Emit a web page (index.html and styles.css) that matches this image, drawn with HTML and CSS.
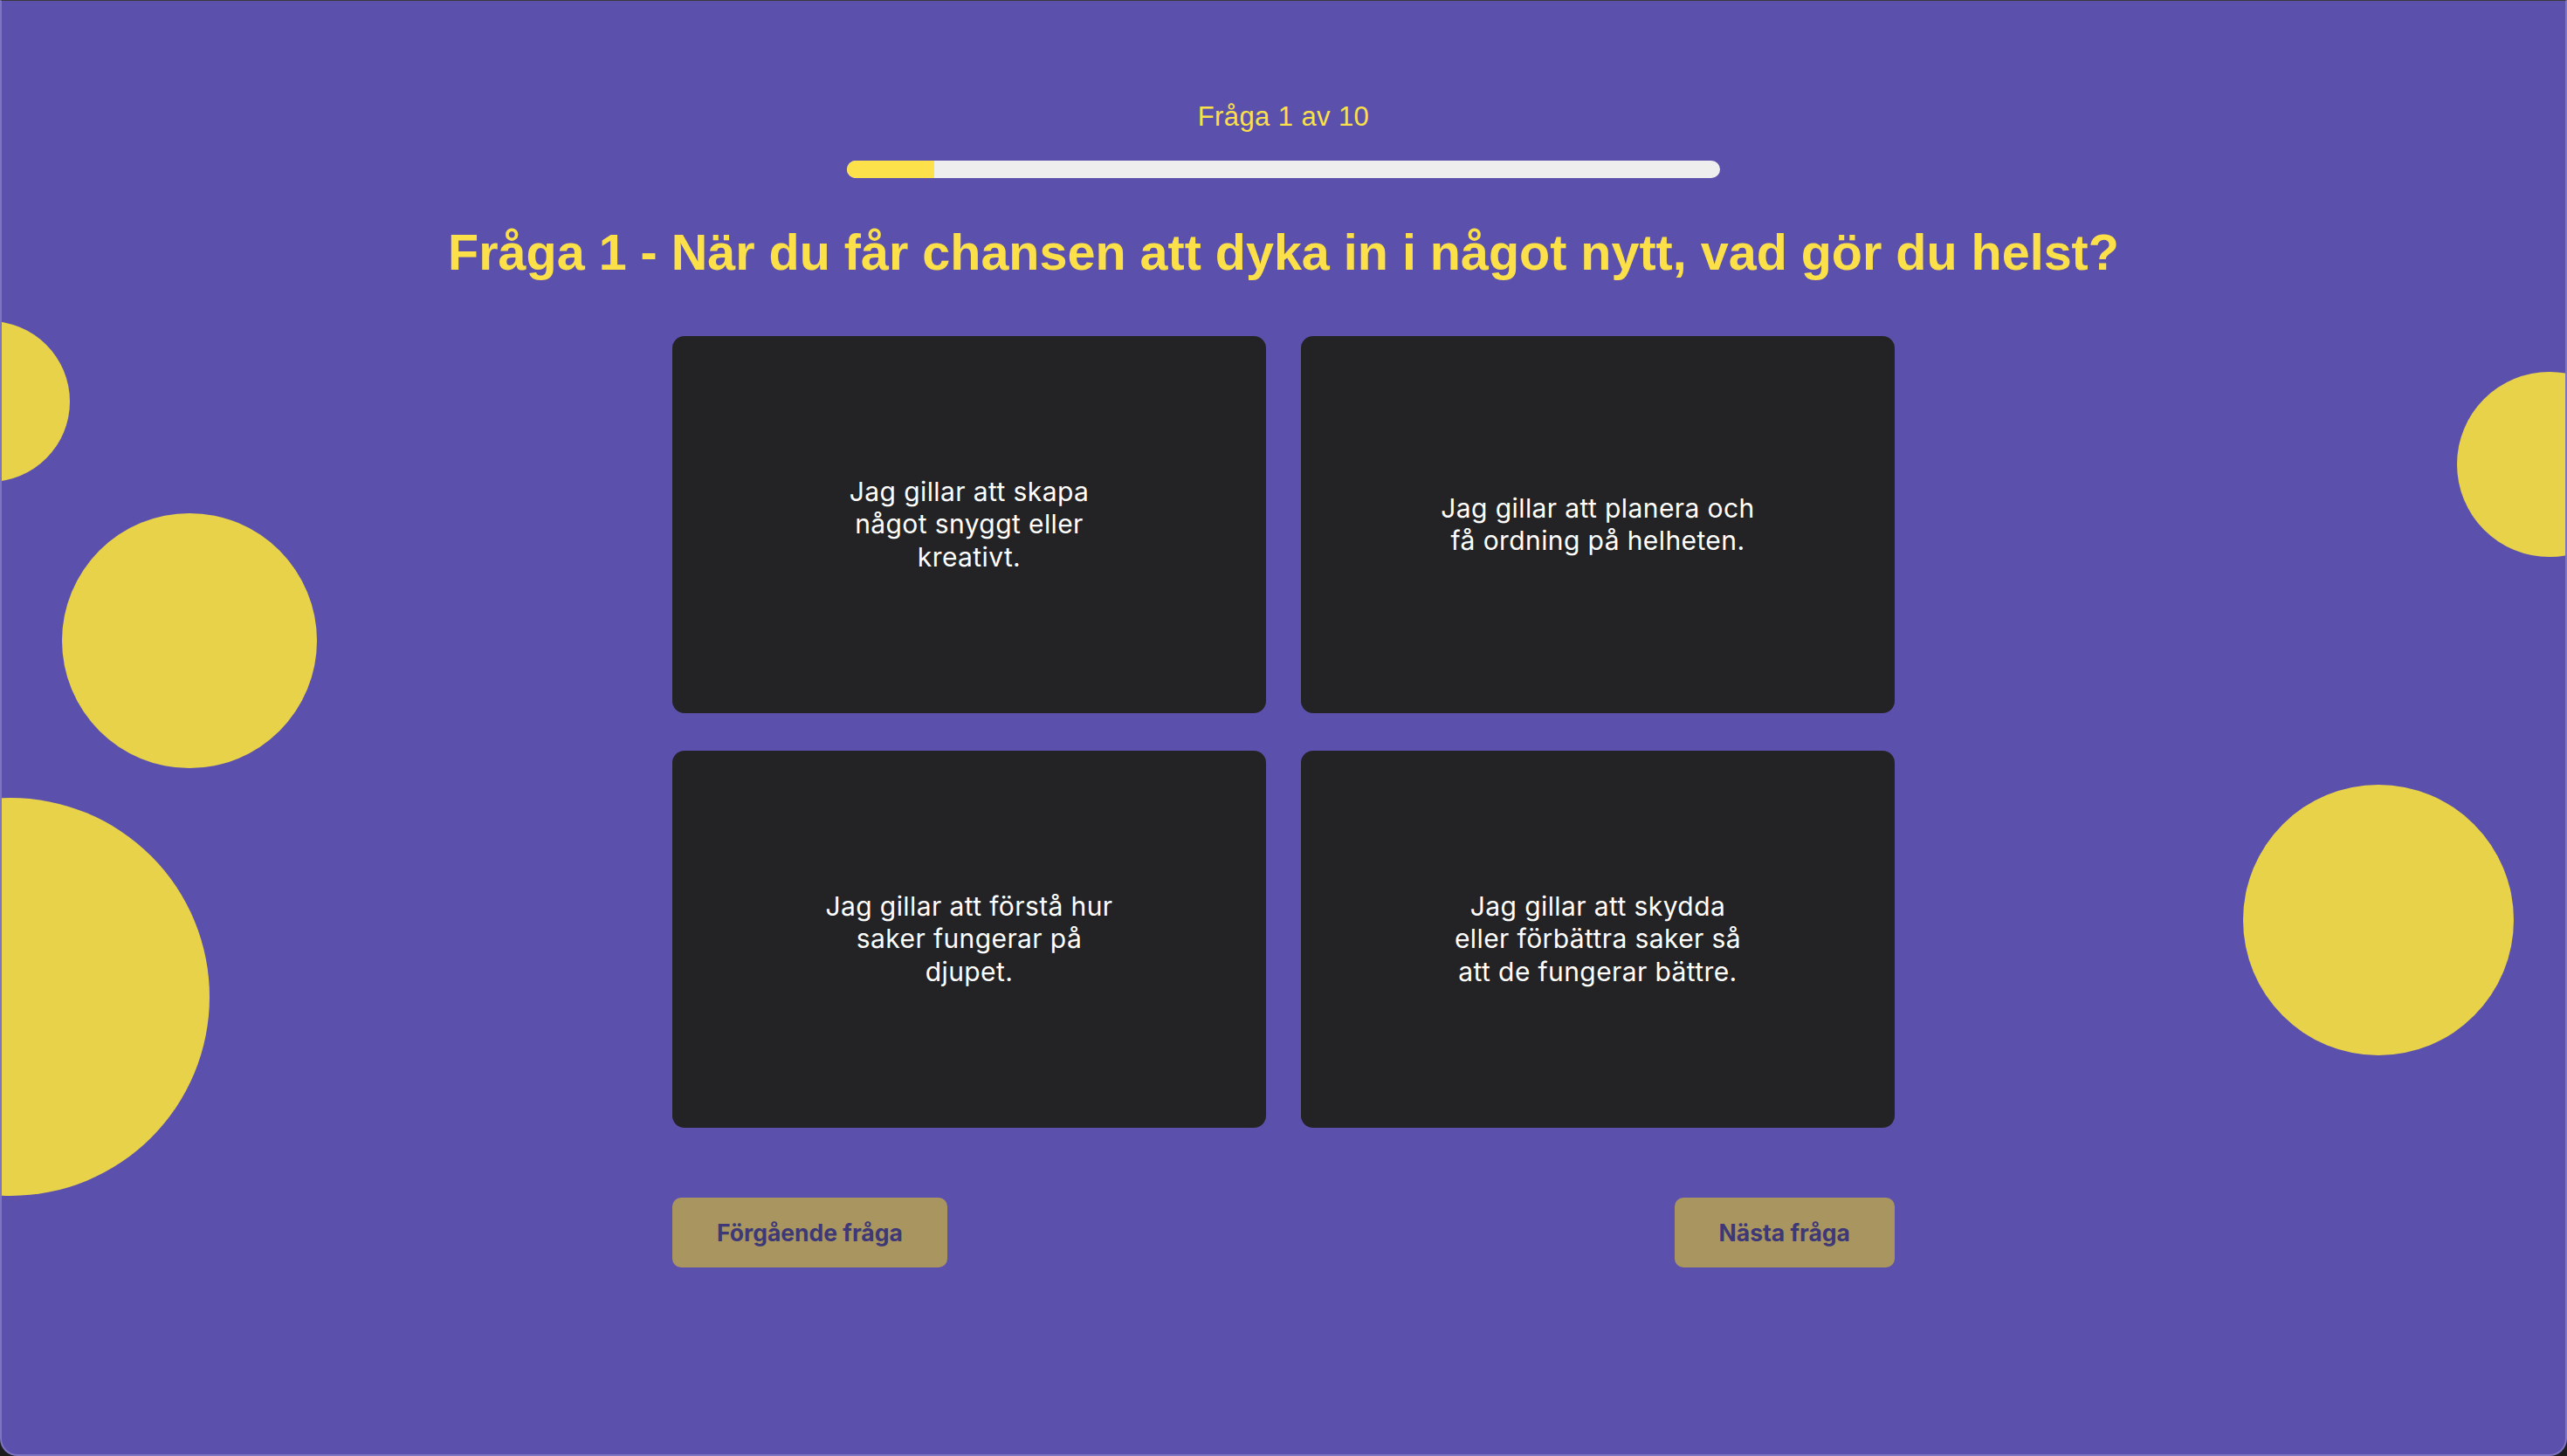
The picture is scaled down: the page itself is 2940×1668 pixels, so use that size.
FILE: index.html
```html
<!DOCTYPE html>
<html lang="sv">
<head>
<meta charset="utf-8">
<title>Quiz</title>
<link rel="stylesheet" href="styles.css">
</head>
<body>
<div class="window">
  <div class="bubble bubble-1"></div>
  <div class="bubble bubble-2"></div>
  <div class="bubble bubble-3"></div>
  <div class="bubble bubble-4"></div>
  <div class="bubble bubble-5"></div>
  <main class="quiz">
    <p class="counter">Fråga 1 av 10</p>
    <div class="progress"><div class="progress-fill" style="width:10%"></div></div>
    <h1 class="question">Fråga 1 - När du får chansen att dyka in i något nytt, vad gör du helst?</h1>
    <div class="options">
      <button class="option">Jag gillar att skapa<br>något snyggt eller<br>kreativt.</button>
      <button class="option">Jag gillar att planera och<br>få ordning på helheten.</button>
      <button class="option">Jag gillar att förstå hur<br>saker fungerar på<br>djupet.</button>
      <button class="option">Jag gillar att skydda<br>eller förbättra saker så<br>att de fungerar bättre.</button>
    </div>
    <div class="nav">
      <button class="nav-btn">Förgående fråga</button>
      <button class="nav-btn">Nästa fråga</button>
    </div>
  </main>
</div>
</body>
</html>
```

FILE: styles.css
```css
html, body {
  margin: 0;
  padding: 0;
  background: #1d1d1f;
}

.window {
  position: relative;
  box-sizing: border-box;
  width: 100%;
  height: 100vh;
  overflow: hidden;
  background: #5b51ac;
  border: 2px solid #7d74c2;
  border-top: 1px solid #3a3a3c;
  border-radius: 0 0 20px 20px;
}

.bubble {
  position: absolute;
  border-radius: 50%;
  background: #e8d24a;
}
.bubble-1 { width: 184px; height: 184px; left: -106px; top: 367px; }
.bubble-2 { width: 292px; height: 292px; left: 69px; top: 587px; }
.bubble-3 { width: 456px; height: 456px; left: -218px; top: 913px; }
.bubble-4 { width: 212px; height: 212px; left: 2812px; top: 425px; }
.bubble-5 { width: 310px; height: 310px; left: 2567px; top: 898px; }

.quiz {
  position: relative;
  display: flex;
  flex-direction: column;
  align-items: center;
  padding-top: 115px;
}

.counter {
  margin: 0;
  font-family: "Liberation Sans", Arial, sans-serif;
  font-size: 31px;
  line-height: 36px;
  letter-spacing: 0.4px;
  color: #fce04a;
}

.progress {
  margin-top: 32px;
  width: 1000px;
  height: 20px;
  border-radius: 10px;
  background: #eeeeee;
  overflow: hidden;
}
.progress-fill {
  height: 100%;
  background: #fde14b;
}

.question {
  margin: 51px 0 0;
  font-family: "Liberation Sans", Arial, sans-serif;
  font-weight: 700;
  font-size: 57.5px;
  line-height: 68px;
  color: #fce04a;
  text-align: center;
}

.options {
  margin-top: 62px;
  display: grid;
  grid-template-columns: 680px 680px;
  column-gap: 40px;
  row-gap: 43px;
}

.option {
  height: 432px;
  border: none;
  border-radius: 14px;
  background: #232325;
  color: #ffffff;
  font-family: Inter, "Noto Sans", sans-serif;
  font-size: 30px;
  line-height: 37.5px;
  letter-spacing: 0.4px;
  text-align: center;
  display: flex;
  align-items: center;
  justify-content: center;
  padding: 0;
}

.nav {
  margin-top: 80px;
  width: 1400px;
  display: flex;
  justify-content: space-between;
}

.nav-btn {
  height: 80px;
  padding: 0 51px;
  border: none;
  border-radius: 10px;
  background: #a8955f;
  color: #3e3877;
  font-family: Inter, "Noto Sans", sans-serif;
  font-weight: 700;
  font-size: 26.5px;
}
```
